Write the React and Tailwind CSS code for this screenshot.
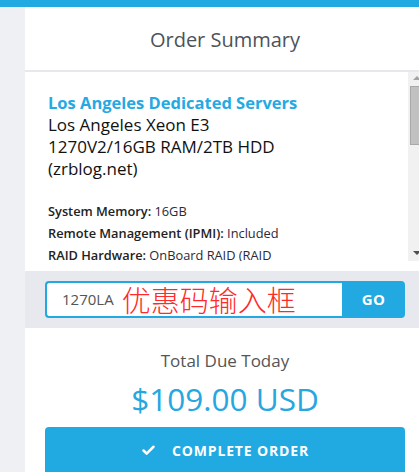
import { Check } from 'lucide-react'

const font = { fontFamily: '"Open Sans", Arial, sans-serif' }

function FakeScrollbar() {
  return (
    <div className="flex w-[17px] shrink-0 flex-col items-center bg-[#f1f1f1]">
      <div className="mt-[4px] h-0 w-0 border-x-[4px] border-b-[4px] border-x-transparent border-b-[#a3a3a3]" />
      <div className="mt-[6px] h-[59px] w-[13px] border border-[#a8a8a8] bg-[#c1c1c1]" />
      <div className="flex-1" />
      <div className="mb-[6px] h-0 w-0 border-x-[4px] border-t-[4px] border-x-transparent border-t-[#505050]" />
    </div>
  )
}

export default function App() {
  return (
    <div className="flex h-[472px] w-[419px] flex-col overflow-hidden bg-[#eef0f4]" style={font}>
      <div className="h-[7px] shrink-0 bg-[#21a9e2]" />
      <div className="flex flex-1">
        <div className="w-[25px] shrink-0 bg-[#eef0f4]" />
        <div className="flex w-[400px] shrink-0 flex-col bg-white">
          <div className="flex h-[65px] items-center justify-center border-b-2 border-[#e7e8ec] pt-[2px]">
            <h2 className="text-[20px] text-[#4c5359]">Order Summary</h2>
          </div>

          <div className="mb-[10px] flex h-[189px]">
            <div className="flex-1 overflow-hidden pl-[23px] pt-[20px]">
              <div className="text-[16.5px] font-bold leading-[22px] text-[#24a9e3]">Los Angeles Dedicated Servers</div>
              <div className="text-[17px] leading-[22px] text-[#111]">Los Angeles Xeon E3</div>
              <div className="text-[17px] leading-[22px] text-[#111]">1270V2/16GB RAM/2TB HDD</div>
              <div className="text-[17px] leading-[22px] text-[#111]">(zrblog.net)</div>
              <div className="mt-[20px] text-[12.8px] leading-[22px] text-[#2a2a3a]">
                <div><span className="font-semibold text-[#222]">System Memory:</span> 16GB</div>
                <div><span className="font-semibold text-[#222]">Remote Management (IPMI):</span> Included</div>
                <div><span className="font-semibold text-[#222]">RAID Hardware:</span> OnBoard RAID (RAID</div>
              </div>
            </div>
            <FakeScrollbar />
          </div>

          <div className="h-[57px] bg-[#e8e9ee] px-[20px] pt-[10px]">
            <div className="flex h-[37px]">
              <div className="flex flex-1 items-center rounded-l-[4px] border-2 border-r-0 border-[#22a9e2] bg-white pl-[15px]">
                <span className="text-[15px] text-[#555]">1270LA</span>
                <span
                  className="ml-[8px] text-[29px] font-light leading-none text-[#ff2a2a]"
                  style={{ fontFamily: '"Noto Sans CJK SC", sans-serif' }}
                >
                  优惠码输入框
                </span>
              </div>
              <button className="w-[63px] rounded-r-[4px] bg-[#22a9e2] text-[15px] font-bold tracking-wide text-white">
                GO
              </button>
            </div>
          </div>

          <div className="flex flex-1 flex-col items-center px-[20px] pt-[22px]">
            <div className="text-[17px] leading-[22px] text-[#555]">Total Due Today</div>
            <div className="mt-[7px] text-[31.5px] leading-[40px] text-[#26a7e0]">$109.00 USD</div>
            <button className="mt-[8px] flex h-[50px] w-full items-center justify-center gap-[16px] rounded-t-[4px] bg-[#21a9e2] pb-[4px] text-white">
              <Check size={15} strokeWidth={4} />
              <span className="text-[14px] font-bold tracking-[0.06em]">COMPLETE ORDER</span>
            </button>
          </div>
        </div>
      </div>
    </div>
  )
}
